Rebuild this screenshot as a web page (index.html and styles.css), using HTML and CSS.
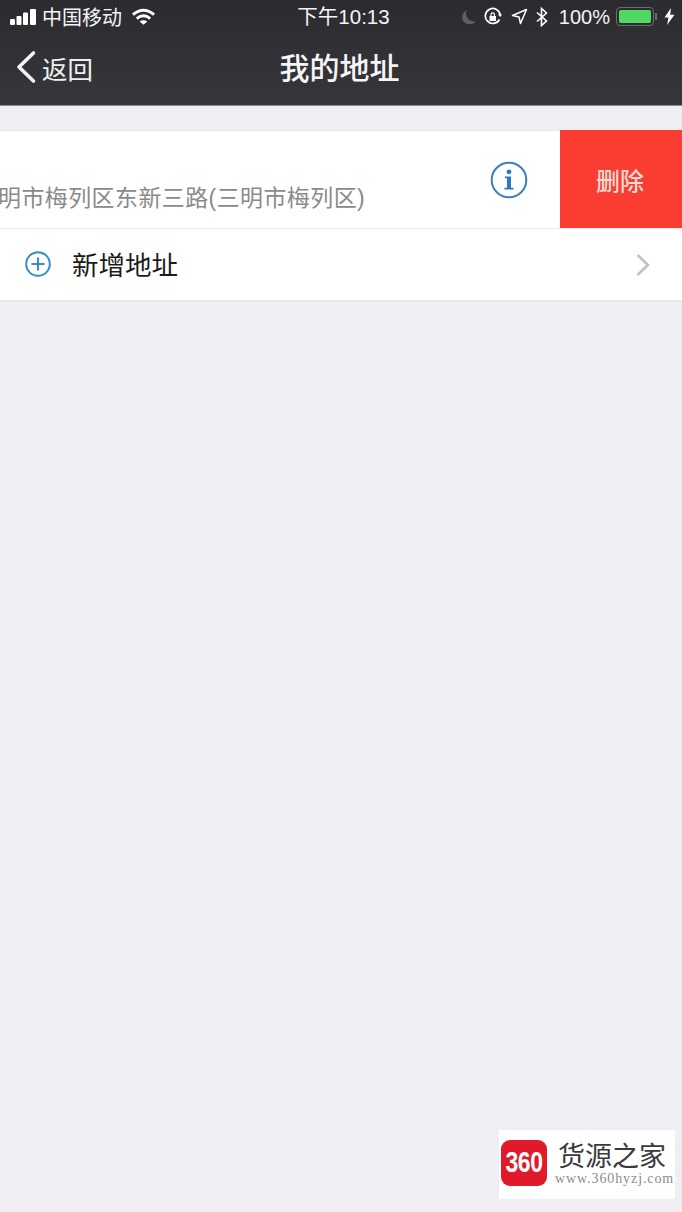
FILE: index.html
```html
<!DOCTYPE html>
<html lang="zh-CN">
<head>
<meta charset="utf-8">
<title>我的地址</title>
<link rel="stylesheet" href="styles.css">
</head>
<body>
<div class="phone">
  <header class="top">
    <div class="status">
      <div class="status-left">
        <svg class="signal" width="27" height="18" viewBox="0 0 27 18"><rect x="0" y="11" width="5" height="6" rx="1.200"/><rect x="6.500" y="8" width="5" height="9" rx="1"/><rect x="13" y="4.500" width="5" height="12.500" rx="1"/><rect x="20" y="1" width="6" height="16" rx="1"/></svg>
        <span class="carrier">中国移动</span>
        <svg class="wifi" width="25" height="18" viewBox="0 0 26 18" fill="none" stroke="#fff" stroke-width="3"><path d="M2 6.500C9 .8 17 .8 24 6.500"/><path d="M6 10.600C10.500 7 15.500 7 20 10.600"/><path d="M13 17 9 13.600C11.500 12 14.500 12 17 13.600Z" fill="#fff" stroke="none"/></svg>
      </div>
      <div class="time">下午10:13</div>
      <div class="status-right">
        <svg class="moon" width="16" height="16" viewBox="0 0 16 16"><path d="M6 1C3.500 6 6 12 14.500 12.500 12 16 5.500 16 2.500 12.500 -.5 8.500 2 2.500 6 1Z" fill="#5f5f63"/></svg>
        <svg width="20" height="20" viewBox="0 0 20 20" fill="none" stroke="#fff" stroke-width="1.700"><path d="M16.500 12.500A7.500 7.500 0 1 1 17.300 8"/><path d="M14.800 7.500H19L17.300 10Z" fill="#fff" stroke="none"/><rect x="6.500" y="9" width="6.500" height="5" fill="#fff" stroke="none"/><path d="M8 9V7.500a1.700 1.700 0 0 1 3.400 0V9" stroke-width="1.200"/></svg>
        <svg class="arrow" width="17" height="17" viewBox="0 0 17 17" fill="none" stroke="#fff" stroke-width="1.500"><path d="M15.500 1.500 1.500 7.500 8 9 9.500 15.500Z" stroke-linejoin="round"/></svg>
        <svg width="14" height="20" viewBox="0 0 14 20" fill="none" stroke="#fff" stroke-width="1.600"><path d="M2 5.500 11.500 14 6.500 18.500V1.500L11.500 6 2 14.500"/></svg>
        <span class="percent">100%</span>
        <div class="battery"><span class="battery-fill"></span></div>
        <span class="battery-tip"></span>
        <svg width="11" height="17" viewBox="0 0 11 17"><path d="M7 0 0.500 9.500H4.500L3 17 10.500 6.800H6.200Z" fill="#fff"/></svg>
      </div>
    </div>
    <nav class="nav">
      <div class="back">
        <svg width="22" height="34" viewBox="0 0 22 34" fill="none" stroke="#f4f4f4" stroke-width="3.600" stroke-linecap="round" stroke-linejoin="round"><path d="M18.500 3 4 17 18.500 31"/></svg>
        <span>返回</span>
      </div>
      <h1 class="title">我的地址</h1>
    </nav>
  </header>

  <main class="list">
    <section class="row row-address">
      <div class="address">明市梅列区东新三路(三明市梅列区)</div>
      <svg class="info" width="38" height="38" viewBox="0 0 38 38"><circle cx="19" cy="19" r="17.300" fill="none" stroke="#3f7fb8" stroke-width="2"/><circle cx="19" cy="10.800" r="2.400" fill="#2d78c0"/><path d="M15 15.500H21V26.700H23.500V28.500H14.500V26.700H17V17.300H15Z" fill="#2d78c0"/></svg>
      <div class="delete">删除</div>
    </section>
    <section class="row row-add">
      <svg class="plus" width="26" height="26" viewBox="0 0 26 26" fill="none" stroke="#3a8cc8" stroke-width="2"><circle cx="13" cy="13" r="11.800"/><path d="M6.500 13H19.500M13 6.500V19.500"/></svg>
      <span class="add-text">新增地址</span>
      <svg class="chevron" width="16" height="24" viewBox="0 0 16 24" fill="none" stroke="#c2c2c4" stroke-width="2.600"><path d="M2.500 2 13 12 2.500 22"/></svg>
    </section>
  </main>

  <aside class="mark">
    <div class="mark-logo"><span class="mark-digits">360</span></div>
    <div class="mark-text">
      <div class="mark-name">货源之家</div>
      <div class="mark-url">www.360hyzj.com</div>
    </div>
  </aside>
</div>
</body>
</html>
```
FILE: styles.css
```css
* { box-sizing: border-box; }
html, body { margin: 0; padding: 0; }
body {
  font-family: "Liberation Sans", "Noto Sans CJK SC", sans-serif;
  background: #eeeef3;
}
.phone {
  position: relative;
  width: 682px;
  height: 1212px;
  overflow: hidden;
  background: #eeeef3;
}
.top {
  height: 106px;
  background: linear-gradient(#2b2b2f, #302f34 40%, #37373b);
  border-bottom: 1px solid #8a8a8c;
  color: #fff;
}
.status {
  height: 33px;
  padding: 0 10px;
  display: grid;
  grid-template-columns: 1fr auto 1fr;
  align-items: center;
  font-size: 20px;
  color: #f4f4f4;
}
.status-left { display: flex; align-items: center; }
.signal { fill: #fff; margin-right: 5px; }
.wifi { margin-left: 9px; }
.time { font-size: 20.500px; padding-left: 5px; margin-bottom: 3px; }
.status-right {
  display: flex;
  align-items: center;
  justify-content: flex-end;
  gap: 7px;
  margin-right: -3px;
}
.moon { margin-right: -1px; }
.arrow { margin-left: 1px; }
.percent { font-size: 20px; margin: 1px -1px 0 3px; }
.battery {
  width: 38px;
  height: 19px;
  padding: 2px;
  border: 1.500px solid #6b6b6b;
  border-radius: 4px;
}
.battery-fill {
  display: block;
  height: 100%;
  background: #4fd964;
  border-radius: 2px;
}
.battery-tip {
  width: 2px;
  height: 7px;
  margin-left: -6px;
  background: #6b6b6b;
}
.nav {
  height: 72px;
  padding: 0 15px 4px 15px;
  display: grid;
  grid-template-columns: 1fr auto 1fr;
  align-items: center;
}
.back {
  display: flex;
  align-items: center;
  gap: 5px;
  font-size: 25.500px;
  color: #f0f0f0;
}
.title {
  margin: 0;
  font-size: 30px;
  line-height: 40px;
  font-weight: 500;
  color: #f6f6f6;
  padding: 4px 3px 0 0;
}
.list { margin-top: 24px; }
.row {
  background: #fff;
  display: flex;
}
.row-address {
  height: 99px;
  box-shadow: inset 0 1px 0 #e6e6e8, inset 0 -1px 0 #ececee;
  overflow: hidden;
}
.address {
  align-self: flex-end;
  margin: 0 0 16px -2px;
  width: 473px;
  flex: none;
  font-size: 23px;
  line-height: 30px;
  letter-spacing: 0.400px;
  color: #8a8a8a;
  white-space: nowrap;
}
.info {
  flex: none;
  align-self: center;
  margin: 1px 32px 0 19px;
}
.delete {
  flex: 1;
  background: #fb3d31;
  color: #f7dcd5;
  font-size: 24px;
  font-weight: 500;
  display: flex;
  align-items: center;
  justify-content: center;
  padding-right: 2px;
  margin-bottom: 1px;
}
.row-add {
  height: 73px;
  align-items: center;
  padding: 0 31px 2px 25px;
  border-bottom: 2px solid #e8e8ea;
}
.plus { margin-top: 1px; }
.chevron { margin-top: 3px; }
.add-text {
  flex: 1;
  margin-left: 21px;
  font-size: 26.500px;
  color: #1c1c1c;
}
.mark {
  position: absolute;
  left: 499px;
  top: 1130px;
  width: 176px;
  height: 69px;
  background: #fff;
  display: flex;
  align-items: center;
  padding: 0 0 4px 2px;
}
.mark-logo {
  width: 46px;
  height: 46px;
  border-radius: 9px;
  background: #e01a2b;
  color: #fff;
  font-weight: 700;
  font-size: 23px;
  letter-spacing: -0.500px;
  display: flex;
  align-items: center;
  justify-content: center;
}
.mark-digits {
  display: block;
  transform: scaleY(1.300);
}
.mark-text { margin: 1px 0 0 11px; }
.mark-name {
  font-family: "Noto Sans CJK SC", sans-serif;
  font-size: 27px;
  line-height: 32px;
  color: #3a3a3a;
}
.mark-url {
  font-family: "Liberation Serif", serif;
  font-size: 14px;
  line-height: 16px;
  letter-spacing: 0.900px;
  color: #8c8c8c;
  white-space: nowrap;
  margin-left: -3px;
}
```
